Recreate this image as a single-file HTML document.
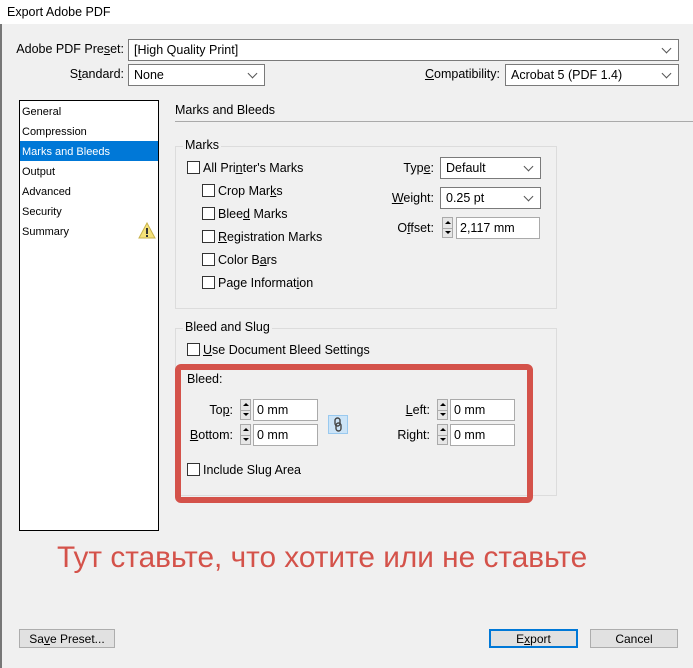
<!DOCTYPE html>
<html><head><meta charset="utf-8"><style>
*{box-sizing:border-box;margin:0;padding:0}
body{width:693px;height:668px;background:#f0f0f0;font-family:"Liberation Sans",sans-serif;font-size:12px;color:#000;position:relative;overflow:hidden}
.a{position:absolute;white-space:nowrap}
.r{text-align:right}
.combo{position:absolute;background:#fff;border:1px solid #7a7a7a;padding:3px 0 0 5px;font-size:12.5px}
.combo:after{content:"";position:absolute;right:8px;top:5px;width:6px;height:6px;border-right:1px solid #555;border-bottom:1px solid #555;transform:rotate(45deg)}
.field{position:absolute;background:#fff;border:1px solid #aaa;padding:3px 0 0 3px;font-size:12.5px}
.spin{position:absolute;width:11px;border:1px solid #aaa;background:#e6e6e6}
.spin:before,.spin:after{content:"";position:absolute;left:2px;border-left:3px solid transparent;border-right:3px solid transparent}
.spin:before{top:3px;border-bottom:3px solid #000}
.spin:after{bottom:3px;border-top:3px solid #000}
.spin i{position:absolute;left:0;right:0;top:50%;border-top:1px solid #aaa}
.cb{position:absolute;width:13px;height:13px;border:1px solid #333;background:#fff}
.grp{position:absolute;border:1px solid #dcdcdc}
.gl{position:absolute;background:#f0f0f0;padding:0 2px}
.btn{position:absolute;background:#e1e1e1;border:1px solid #adadad;text-align:center;padding-top:2px}
u{text-decoration:underline}
</style></head><body>
<div class="a" style="left:0;top:0;width:693px;height:24px;background:#fff"></div>
<div class="a" style="left:0;top:24px;width:2px;height:644px;background:#777"></div>
<div class="a" style="left:7px;top:5px;font-size:12.5px">Export Adobe PDF</div>

<div class="a r" style="left:0;width:124px;top:42px;font-size:12.5px">Adobe PDF Pre<u>s</u>et:</div>
<div class="combo" style="left:128px;top:39px;width:551px;height:22px">[High Quality Print]</div>
<div class="a r" style="left:0;width:124px;top:67px;font-size:12.5px">S<u>t</u>andard:</div>
<div class="combo" style="left:128px;top:64px;width:137px;height:22px">None</div>
<div class="a r" style="left:380px;width:120px;top:67px;font-size:12.5px"><u>C</u>ompatibility:</div>
<div class="combo" style="left:505px;top:64px;width:174px;height:22px">Acrobat 5 (PDF 1.4)</div>

<div class="a" style="left:19px;top:100px;width:140px;height:431px;border:1px solid #000;background:#fff;font-size:11px">
<div class="a" style="left:2px;top:5px">General</div>
<div class="a" style="left:2px;top:25px">Compression</div>
<div class="a" style="left:0;top:40px;width:138px;height:20px;background:#0078d7"></div>
<div class="a" style="left:2px;top:45px;color:#fff">Marks and Bleeds</div>
<div class="a" style="left:2px;top:65px">Output</div>
<div class="a" style="left:2px;top:85px">Advanced</div>
<div class="a" style="left:2px;top:105px">Security</div>
<div class="a" style="left:2px;top:125px">Summary</div>
<svg class="a" style="left:118px;top:121px" width="18" height="17" viewBox="0 0 18 17"><path d="M9 1L17 16H1Z" fill="#f5e27a" stroke="#c8b24a"/><rect x="8" y="6" width="2" height="6" fill="#333"/><rect x="8" y="13" width="2" height="2" fill="#333"/></svg>
</div>

<div class="a" style="left:175px;top:103px;font-size:12.5px">Marks and Bleeds</div>
<div class="a" style="left:175px;top:121px;width:518px;height:1px;background:#aaa"></div>

<div class="grp" style="left:175px;top:146px;width:382px;height:163px"></div>
<div class="gl a" style="left:183px;top:138px;font-size:12.5px">Marks</div>
<div class="cb" style="left:187px;top:161px"></div><div class="a" style="left:203px;top:161px;font-size:12.5px">All Pri<u>n</u>ter's Marks</div>
<div class="cb" style="left:202px;top:184px"></div><div class="a" style="left:218px;top:184px;font-size:12.5px">Crop Mar<u>k</u>s</div>
<div class="cb" style="left:202px;top:207px"></div><div class="a" style="left:218px;top:207px;font-size:12.5px">Blee<u>d</u> Marks</div>
<div class="cb" style="left:202px;top:230px"></div><div class="a" style="left:218px;top:230px;font-size:12.5px"><u>R</u>egistration Marks</div>
<div class="cb" style="left:202px;top:253px"></div><div class="a" style="left:218px;top:253px;font-size:12.5px">Color B<u>a</u>rs</div>
<div class="cb" style="left:202px;top:276px"></div><div class="a" style="left:218px;top:276px;font-size:12.5px">Page Informat<u>i</u>on</div>

<div class="a r" style="left:360px;width:74px;top:161px;font-size:12.5px">Typ<u>e</u>:</div>
<div class="combo" style="left:440px;top:157px;width:101px;height:22px">Default</div>
<div class="a r" style="left:360px;width:74px;top:191px;font-size:12.5px"><u>W</u>eight:</div>
<div class="combo" style="left:440px;top:187px;width:101px;height:22px">0.25 pt</div>
<div class="a r" style="left:360px;width:74px;top:221px;font-size:12.5px">O<u>f</u>fset:</div>
<div class="spin" style="left:442px;top:217px;height:21px"><i></i></div>
<div class="field" style="left:456px;top:217px;width:84px;height:22px">2,117 mm</div>

<div class="grp" style="left:175px;top:328px;width:382px;height:168px"></div>
<div class="gl a" style="left:183px;top:320px;font-size:12.5px">Bleed and Slug</div>
<div class="cb" style="left:187px;top:343px"></div><div class="a" style="left:203px;top:343px;font-size:12.5px"><u>U</u>se Document Bleed Settings</div>

<div class="a" style="left:175px;top:364px;width:358px;height:139px;border:6px solid #d4524a;border-radius:6px"></div>
<div class="a" style="left:187px;top:372px;font-size:12.5px">Bleed:</div>
<div class="a r" style="left:180px;width:53px;top:403px;font-size:12.5px">To<u>p</u>:</div>
<div class="spin" style="left:240px;top:399px;height:21px"><i></i></div>
<div class="field" style="left:253px;top:399px;width:65px;height:22px">0 mm</div>
<div class="a r" style="left:180px;width:53px;top:428px;font-size:12.5px"><u>B</u>ottom:</div>
<div class="spin" style="left:240px;top:424px;height:21px"><i></i></div>
<div class="field" style="left:253px;top:424px;width:65px;height:22px">0 mm</div>
<div class="a" style="left:328px;top:415px;width:20px;height:19px;background:#cce4f7;border:1px solid #99c9ef"></div>
<svg class="a" style="left:333px;top:417px" width="10" height="15" viewBox="0 0 10 15"><rect x="2" y="1" width="5" height="8" rx="2.5" fill="none" stroke="#444" stroke-width="1.4"/><rect x="3" y="6" width="5" height="8" rx="2.5" fill="none" stroke="#444" stroke-width="1.4"/></svg>
<div class="a r" style="left:380px;width:50px;top:403px;font-size:12.5px"><u>L</u>eft:</div>
<div class="spin" style="left:437px;top:399px;height:21px"><i></i></div>
<div class="field" style="left:450px;top:399px;width:65px;height:22px">0 mm</div>
<div class="a r" style="left:380px;width:50px;top:428px;font-size:12.5px">Ri<u>g</u>ht:</div>
<div class="spin" style="left:437px;top:424px;height:21px"><i></i></div>
<div class="field" style="left:450px;top:424px;width:65px;height:22px">0 mm</div>
<div class="cb" style="left:187px;top:463px"></div><div class="a" style="left:203px;top:463px;font-size:12.5px">Include Slu<u>g</u> Area</div>

<div class="a" style="left:57px;top:541px;font-size:29.8px;color:#d4524a">Тут ставьте, что хотите или не ставьте</div>

<div class="btn" style="left:19px;top:629px;width:96px;height:19px">Sa<u>v</u>e Preset...</div>
<div class="btn" style="left:489px;top:629px;width:89px;height:19px;border:2px solid #0078d7;padding-top:1px">E<u>x</u>port</div>
<div class="btn" style="left:590px;top:629px;width:88px;height:19px">Cancel</div>
</body></html>
